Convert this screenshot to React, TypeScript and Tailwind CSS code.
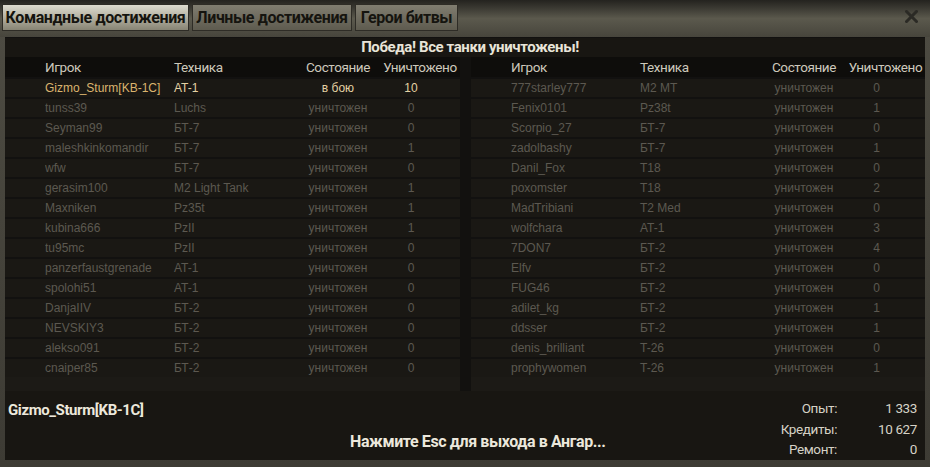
const narrow = "font-['Roboto','Liberation_Sans_Narrow',sans-serif] tracking-[-0.4px]"
const plain = "font-['Liberation_Sans','Arial',sans-serif]"

type Row = { name: string; tank: string; state: string; kills: string; me?: boolean }

const left: Row[] = [
	{ name: 'Gizmo_Sturm[KB-1C]', tank: 'AT-1', state: 'в бою', kills: '10', me: true },
	{ name: 'tunss39', tank: 'Luchs', state: 'уничтожен', kills: '0' },
	{ name: 'Seyman99', tank: 'БТ-7', state: 'уничтожен', kills: '0' },
	{ name: 'maleshkinkomandir', tank: 'БТ-7', state: 'уничтожен', kills: '1' },
	{ name: 'wfw', tank: 'БТ-7', state: 'уничтожен', kills: '0' },
	{ name: 'gerasim100', tank: 'M2 Light Tank', state: 'уничтожен', kills: '1' },
	{ name: 'Maxniken', tank: 'Pz35t', state: 'уничтожен', kills: '1' },
	{ name: 'kubina666', tank: 'PzII', state: 'уничтожен', kills: '1' },
	{ name: 'tu95mc', tank: 'PzII', state: 'уничтожен', kills: '0' },
	{ name: 'panzerfaustgrenade', tank: 'AT-1', state: 'уничтожен', kills: '0' },
	{ name: 'spolohi51', tank: 'AT-1', state: 'уничтожен', kills: '0' },
	{ name: 'DanjaIIV', tank: 'БТ-2', state: 'уничтожен', kills: '0' },
	{ name: 'NEVSKIY3', tank: 'БТ-2', state: 'уничтожен', kills: '0' },
	{ name: 'alekso091', tank: 'БТ-2', state: 'уничтожен', kills: '0' },
	{ name: 'cnaiper85', tank: 'БТ-2', state: 'уничтожен', kills: '0' },
]

const right: Row[] = [
	{ name: '777starley777', tank: 'M2 MT', state: 'уничтожен', kills: '0' },
	{ name: 'Fenix0101', tank: 'Pz38t', state: 'уничтожен', kills: '1' },
	{ name: 'Scorpio_27', tank: 'БТ-7', state: 'уничтожен', kills: '0' },
	{ name: 'zadolbashy', tank: 'БТ-7', state: 'уничтожен', kills: '1' },
	{ name: 'Danil_Fox', tank: 'T18', state: 'уничтожен', kills: '0' },
	{ name: 'poxomster', tank: 'T18', state: 'уничтожен', kills: '2' },
	{ name: 'MadTribiani', tank: 'T2 Med', state: 'уничтожен', kills: '0' },
	{ name: 'wolfchara', tank: 'AT-1', state: 'уничтожен', kills: '3' },
	{ name: '7DON7', tank: 'БТ-2', state: 'уничтожен', kills: '4' },
	{ name: 'Elfv', tank: 'БТ-2', state: 'уничтожен', kills: '0' },
	{ name: 'FUG46', tank: 'БТ-2', state: 'уничтожен', kills: '0' },
	{ name: 'adilet_kg', tank: 'БТ-2', state: 'уничтожен', kills: '1' },
	{ name: 'ddsser', tank: 'БТ-2', state: 'уничтожен', kills: '1' },
	{ name: 'denis_brilliant', tank: 'T-26', state: 'уничтожен', kills: '0' },
	{ name: 'prophywomen', tank: 'T-26', state: 'уничтожен', kills: '1' },
]

const cols = 'grid grid-cols-[40px_129px_122px_84px_1fr] items-center'

function Team({ rows }: { rows: Row[] }) {
	return (
		<div className="flex flex-col">
			{/* header */}
			<div className={`${cols} h-[20px] bg-[#0e0d0b] ${narrow} text-[13.5px] text-[#cdc8bb]`}>
				<div />
				<div>Игрок</div>
				<div>Техника</div>
				<div className="text-center">Состояние</div>
				<div className="text-center">Уничтожено</div>
			</div>
			{rows.map(r => (
				<div
					key={r.name}
					className={`${cols} h-[20px] bg-[#1a1814] border-t-2 border-[#121110] ${plain} text-[12px] ${r.me ? 'text-[#e4d2a4]' : 'text-[#5c5850]'}`}
				>
					<div />
					<div className={`truncate ${r.me ? 'text-[#dab46e]' : ''}`}>{r.name}</div>
					<div>{r.tank}</div>
					<div className="text-center">{r.state}</div>
					<div className="text-center pr-[18px]">{r.kills}</div>
				</div>
			))}
		</div>
	)
}

function Tab({ label, width, active }: { label: string; width: string; active?: boolean }) {
	return (
		<div
			className={`${width} h-[27px] flex items-center justify-center ${narrow} font-bold text-[16px] text-[#15140f] border border-[#2e2c26] ${
				active
					? 'bg-gradient-to-b from-[#dddbcf] via-[#b4b1a2] to-[#878474]'
					: 'bg-gradient-to-b from-[#807d70] to-[#5e5b4f]'
			}`}
		>
			{label}
		</div>
	)
}

export default function App() {
	return (
		<div className="w-[930px] h-[467px] flex flex-col bg-gradient-to-b from-[#4e4c43] to-[#3d3b34] overflow-hidden">
			{/* ── Title bar with tabs ── */}
			<div className="relative h-[37px] bg-gradient-to-b from-[#24231f] via-[#5b594d] to-[#47453c] pt-[4px] pl-[2px]">
				<div className="flex gap-[3px] items-start">
					<Tab label="Командные достижения" width="w-[187px]" active />
					<Tab label="Личные достижения" width="w-[160px]" />
					<Tab label="Герои битвы" width="w-[103px]" />
				</div>
				<svg className="absolute right-[12px] top-[10px]" width="13" height="13" viewBox="0 0 13 13">
					<path d="M1.5 1.5 L11.5 11.5 M11.5 1.5 L1.5 11.5" stroke="#2b2a25" strokeWidth="3" strokeLinecap="square" />
				</svg>
			</div>

			{/* ── Content panel ── */}
			<div className="flex-1 mx-[5px] mb-[7px] bg-[#181612] flex flex-col border-t border-[#121110]">
				<div className={`h-[19px] flex items-center justify-center ${narrow} font-bold text-[15px] text-[#e8e4d8] pl-[10px]`}>
					Победа! Все танки уничтожены!
				</div>
				<div className="flex">
					<div className="w-[455px]">
						<Team rows={left} />
					</div>
					<div className="w-[11px] bg-[#12110f]" />
					<div className="flex-1">
						<Team rows={right} />
					</div>
				</div>
				<div className="flex">
					<div className="w-[455px] h-[14px] bg-[#1c1a16]" />
					<div className="w-[11px] bg-[#12110f]" />
					<div className="flex-1 bg-[#1c1a16]" />
				</div>

				{/* ── Footer ── */}
				<div className="flex-1 flex">
					<div className={`w-[345px] pl-[3px] pt-[8px] ${narrow} font-bold text-[15px] text-[#ece8dc]`}>
						Gizmo_Sturm[KB-1C]
					</div>
					<div className={`flex items-end pb-[6px] ${narrow} font-bold text-[16px] text-[#ece8dc]`}>
						Нажмите Esc для выхода в Ангар...
					</div>
					<div className="flex-1 flex justify-end pr-[8px] pt-[7px]">
						<div className={`grid grid-cols-[auto_72px] gap-x-[8px] leading-[20px] ${narrow} text-[13.5px] text-[#d6d2c6]`}>
							<div className="text-right">Опыт:</div>
							<div className="text-right">1 333</div>
							<div className="text-right">Кредиты:</div>
							<div className="text-right">10 627</div>
							<div className="text-right">Ремонт:</div>
							<div className="text-right">0</div>
						</div>
					</div>
				</div>
			</div>
		</div>
	)
}
